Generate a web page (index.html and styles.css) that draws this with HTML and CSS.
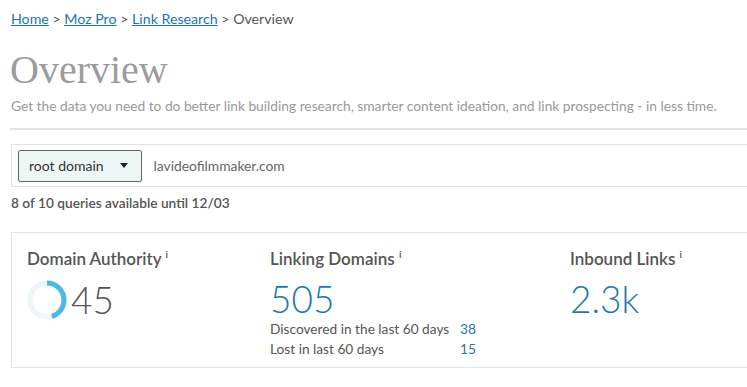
FILE: index.html
```html
<!DOCTYPE html>
<html>
<head>
    <title>Overview</title>
    <link rel="stylesheet" href="styles.css">
</head>
<body>
    <div class="page">
        <nav class="crumbs">
            <a href="#">Home</a> &gt; <a href="#">Moz Pro</a> &gt; <a href="#">Link Research</a> &gt; Overview
        </nav>

        <h1 class="title">Overview</h1>
        <p class="lead">Get the data you need to do better link building research, smarter content ideation, and link prospecting - in less time.</p>
        <hr class="rule">

        <div class="search">
            <div class="select">root domain <span class="caret"></span></div>
            <div class="query">lavideofilmmaker.com</div>
        </div>
        <p class="quota">8 of 10 queries available until 12/03</p>

        <div class="metrics">
            <div class="metric">
                <div class="label">Domain Authority <sup>i</sup></div>
                <div class="da">
                    <svg class="donut" width="40" height="40" viewBox="0 0 40 40">
                        <circle cx="20" cy="20" r="17" fill="none" stroke="#edf5f7" stroke-width="5"></circle>
                        <circle cx="20" cy="20" r="17" fill="none" stroke="#4cb8e6" stroke-width="5"
                            stroke-dasharray="48.1 106.8" transform="rotate(-90 20 20)"></circle>
                    </svg>
                    <span class="num grey">45</span>
                </div>
            </div>
            <div class="metric">
                <div class="label">Linking Domains <sup>i</sup></div>
                <div class="num blue">505</div>
                <div class="detail"><span>Discovered in the last 60 days</span><span class="val">38</span></div>
                <div class="detail"><span>Lost in last 60 days</span><span class="val">15</span></div>
            </div>
            <div class="metric">
                <div class="label">Inbound Links <sup>i</sup></div>
                <div class="num blue">2.3k</div>
            </div>
        </div>
    </div>
</body>
</html>
```

FILE: styles.css
```css
body {
    margin: 0;
    font-family: Lato, "Open Sans", sans-serif;
    font-size: 14px;
    color: #555;
    background: #fff;
    overflow: hidden;
}

.page {
    width: 760px;
    padding: 11px 0 0 11px;
}

.crumbs {
    font-size: 14.2px;
    line-height: 16px;
    color: #555;
}

.crumbs a {
    color: #1a74b6;
}

.title {
    margin: 21px 0 0 -1px;
    font-family: "Liberation Serif", serif;
    font-weight: normal;
    font-size: 40px;
    line-height: 44px;
    color: #9c9c9c;
}

.lead {
    margin: 6px 0 0;
    font-size: 13.75px;
    line-height: 16px;
    color: #999;
}

.rule {
    margin: 14px 0 0 -1px;
    border: 0;
    height: 2px;
    background: #dde4e4;
}

.search {
    display: flex;
    align-items: center;
    gap: 12px;
    margin-top: 14px;
    height: 41px;
    padding-left: 6px;
    border: 1px solid #dde4e4;
}

.select {
    display: flex;
    align-items: center;
    gap: 16px;
    height: 30px;
    padding: 0 13px 0 10px;
    background: #eef6f5;
    border: 1px solid #666;
    border-radius: 2px;
    font-size: 14px;
    color: #333;
}

.caret {
    width: 0;
    height: 0;
    border-left: 4px solid transparent;
    border-right: 4px solid transparent;
    border-top: 5px solid #222;
}

.query {
    font-size: 13.8px;
    color: #666;
}

.quota {
    margin: 8px 0 0;
    font-size: 13.7px;
    line-height: 16px;
    font-weight: 600;
    color: #555;
}

.metrics {
    display: grid;
    grid-template-columns: 243px 300px 1fr;
    margin-top: 21px;
    height: 134px;
    padding-left: 15px;
    border: 1px solid #dde4e4;
}

.metric {
    padding-top: 11px;
}

.label {
    font-size: 17px;
    line-height: 20px;
    font-weight: 600;
    color: #555;
}

.label sup {
    font-size: 10px;
}

.da {
    display: flex;
    align-items: center;
    gap: 4px;
    margin-top: 11px;
}

.num {
    font-size: 37px;
    line-height: 40px;
    font-weight: 300;
}

.grey {
    color: #555;
}

.blue {
    color: #1a78b4;
    margin-top: 10px;
}

.detail {
    display: flex;
    font-size: 13.7px;
    line-height: 20px;
    color: #555;
}

.detail span:first-child {
    width: 190px;
}

.val {
    color: #1a78b4;
}
```
